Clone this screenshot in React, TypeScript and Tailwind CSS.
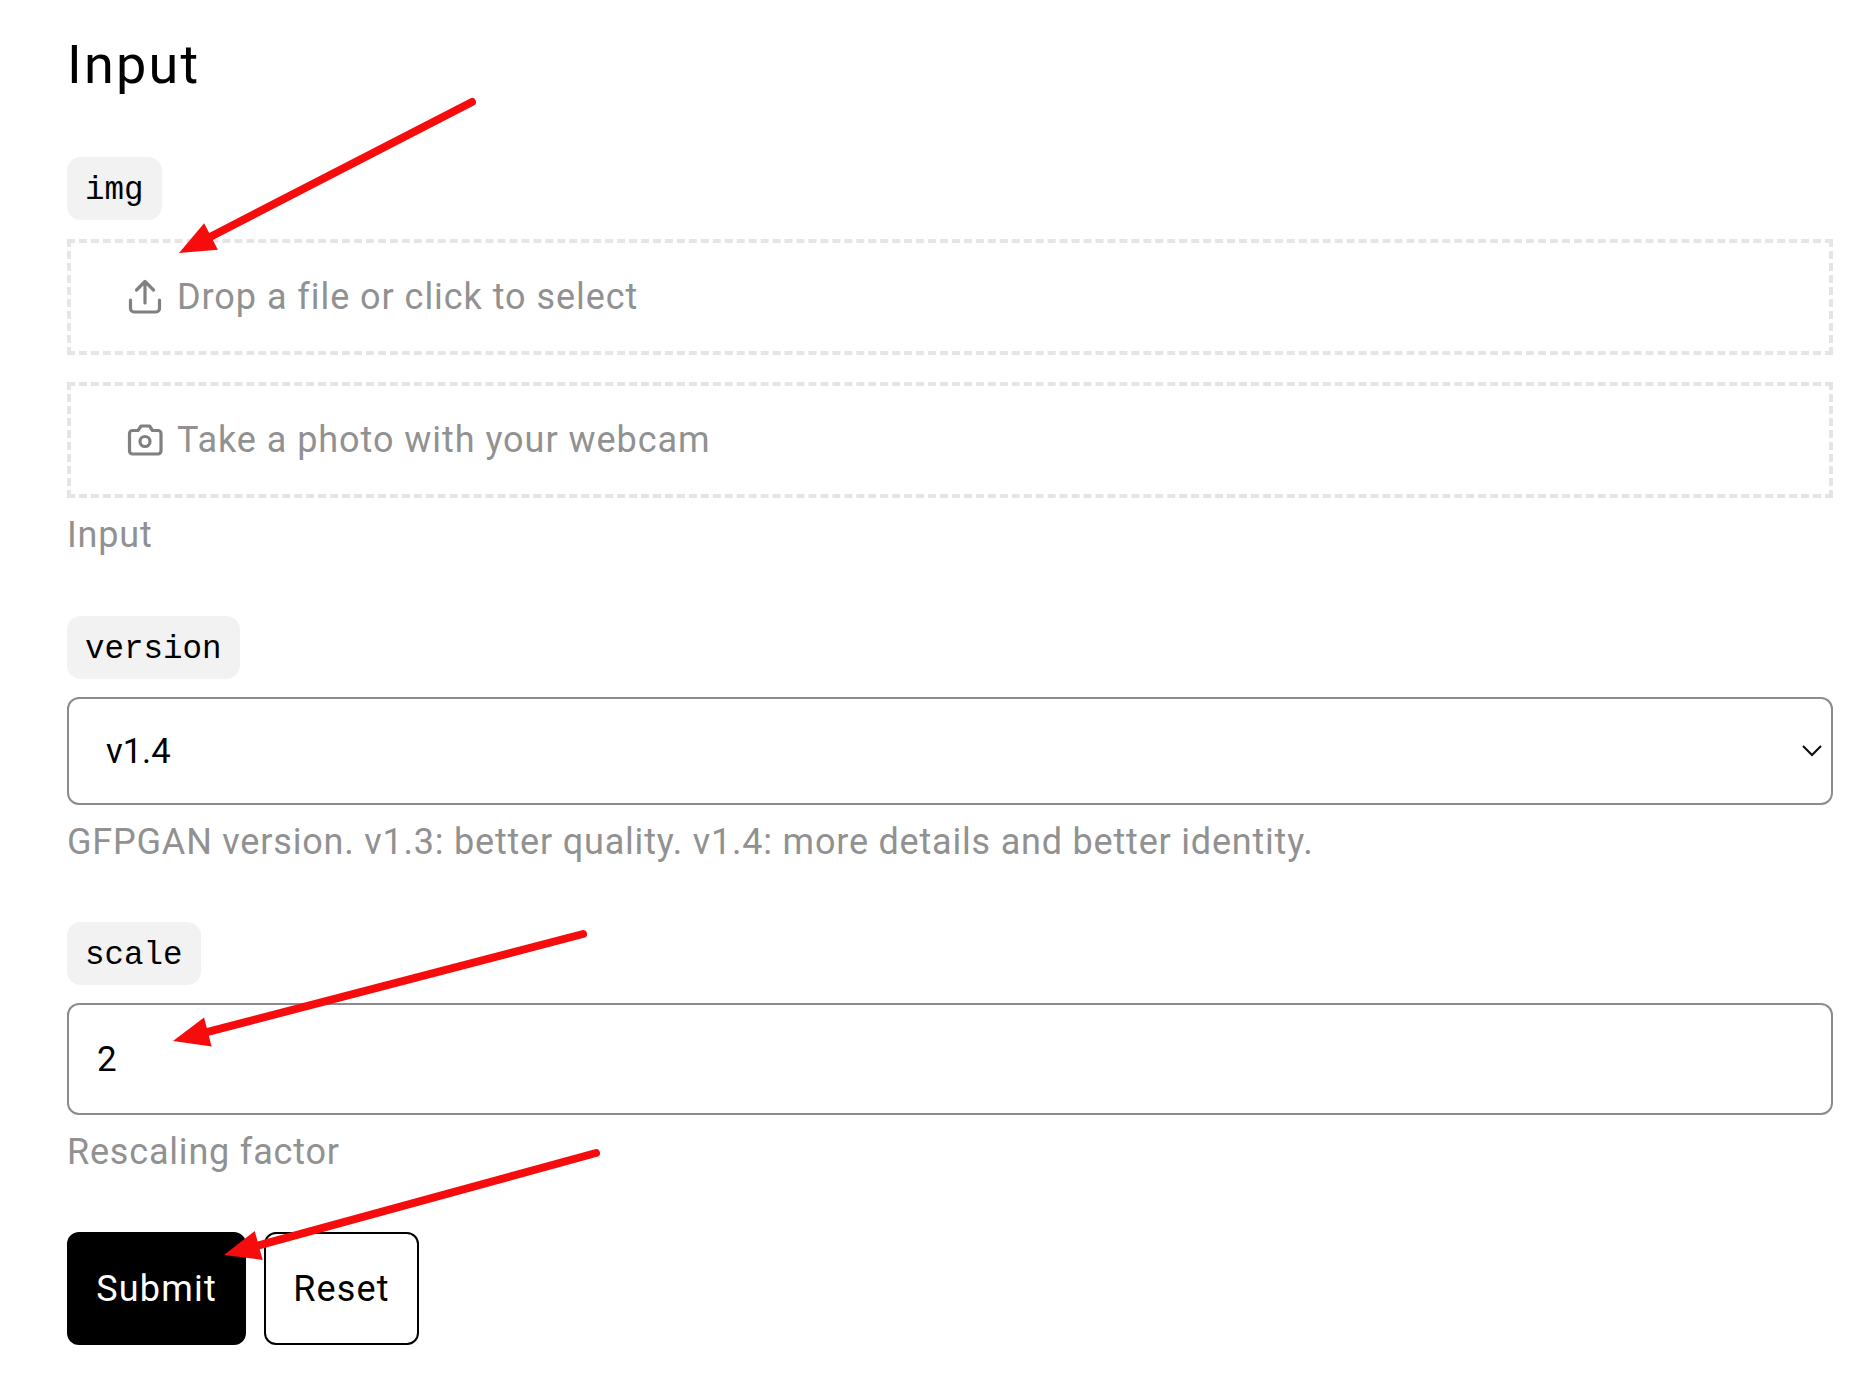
import React from "react";

const font = { fontFamily: "Roboto, sans-serif" };

const Chip = ({ children }: { children: React.ReactNode }) => (
    <div className="w-max h-[63px] flex items-center px-[18px] pt-[6px] bg-[#f2f2f2] rounded-[14px] text-[32.5px] text-black font-['Liberation_Mono',monospace]">
        {children}
    </div>
);

const Help = ({ children }: { children: React.ReactNode }) => (
    <p className="text-[36px] leading-[44px] tracking-[0.8px] text-[#919191]">{children}</p>
);

const UploadIcon = () => (
    <svg width="36" height="36" viewBox="0 0 36 36" fill="none" stroke="#808080" strokeWidth="3.2" strokeLinecap="round" strokeLinejoin="round">
        <path d="M3.5 21v8.5a3.5 3.5 0 0 0 3.5 3.5h22a3.5 3.5 0 0 0 3.5-3.5V21" />
        <path d="M18 24V2.5M9.5 11l8.5-8.5 8.500 8.500" />
    </svg>
);

const CameraIcon = () => (
    <svg width="36" height="36" viewBox="0 0 36 36" fill="none" stroke="#808080" strokeWidth="3.2" strokeLinecap="round" strokeLinejoin="round">
        <path d="M5.500 8.500h5.500l3-4.500h8.500l3 4.500h5.500a3 3 0 0 1 3 3v17.500a3 3 0 0 1-3 3H5.500a3 3 0 0 1-3-3V11.500a3 3 0 0 1 3-3z" />
        <circle cx="18" cy="19.500" r="5" />
    </svg>
);

const DropBox = ({ icon, label }: { icon: React.ReactNode; label: string }) => (
    <div className="h-[116px] flex items-center gap-[14px] pl-[56px] border-[4px] border-dashed border-[#e5e5e5] text-[36px] tracking-[0.95px] text-[#919191]">
        {icon}
        <span>{label}</span>
    </div>
);

const Arrow = ({ x1, y1, x2, y2 }: { x1: number; y1: number; x2: number; y2: number }) => {
    const len = Math.hypot(x2 - x1, y2 - y1);
    const ux = (x2 - x1) / len;
    const uy = (y2 - y1) / len;
    const bx = x2 - ux * 36;
    const by = y2 - uy * 36;
    const head = `${x2},${y2} ${bx - uy * 15},${by + ux * 15} ${bx + uy * 15},${by - ux * 15}`;
    return (
        <>
            <line x1={x1} y1={y1} x2={bx} y2={by} stroke="#f60c0c" strokeWidth="8" strokeLinecap="round" />
            <polygon points={head} fill="#f60c0c" />
        </>
    );
};

export default function App() {
    return (
        <div style={font} className="relative w-[1862px] h-[1395px] bg-white pl-[67px] pr-[29px] pt-[34px] text-black overflow-hidden">
            <h2 className="text-[54px] leading-[62px] tracking-[2.2px]">Input</h2>

            <div className="mt-[61px] flex flex-col">
                <Chip>img</Chip>
                <div className="mt-[19px]">
                    <DropBox icon={<UploadIcon />} label="Drop a file or click to select" />
                </div>
                <div className="mt-[27px]">
                    <DropBox icon={<CameraIcon />} label="Take a photo with your webcam" />
                </div>
                <div className="mt-[15px]">
                    <Help>Input</Help>
                </div>
            </div>

            <div className="mt-[59px] flex flex-col">
                <Chip>version</Chip>
                <div className="relative mt-[18px]">
                    <select className="appearance-none block w-full h-[108px] pl-[37px] pt-[2px] border-2 border-[#8c8c8c] rounded-[12px] text-[34.5px] bg-white outline-none">
                        <option>v1.4</option>
                        <option>v1.3</option>
                    </select>
                    <svg className="absolute right-[11px] top-[47px]" width="20" height="14" viewBox="0 0 20 14" fill="none" stroke="#111" strokeWidth="2.2">
                        <path d="M1 2l9 9 9-9" />
                    </svg>
                </div>
                <div className="mt-[15px]">
                    <Help>GFPGAN version. v1.3: better quality. v1.4: more details and better identity.</Help>
                </div>
            </div>

            <div className="mt-[58px] flex flex-col">
                <Chip>scale</Chip>
                <input
                    className="block mt-[18px] w-full h-[112px] pl-[28px] border-2 border-[#8c8c8c] rounded-[12px] text-[35px] outline-none"
                    type="text"
                    defaultValue="2"
                />
                <div className="mt-[15px]">
                    <Help>Rescaling factor</Help>
                </div>
            </div>

            <div className="mt-[58px] flex gap-[18px]">
                <button className="w-[179px] h-[113px] bg-black text-white rounded-[12px] text-[36px] tracking-[1.2px]">Submit</button>
                <button className="w-[155px] h-[113px] bg-white border-2 border-black rounded-[12px] text-[36px] tracking-[1.2px]">Reset</button>
            </div>

            <svg className="absolute inset-0 pointer-events-none" width="1862" height="1395" viewBox="0 0 1862 1395">
                <Arrow x1={472} y1={102} x2={179} y2={253} />
                <Arrow x1={583} y1={934} x2={173} y2={1041} />
                <Arrow x1={596} y1={1153} x2={224} y2={1255} />
            </svg>
        </div>
    );
}
